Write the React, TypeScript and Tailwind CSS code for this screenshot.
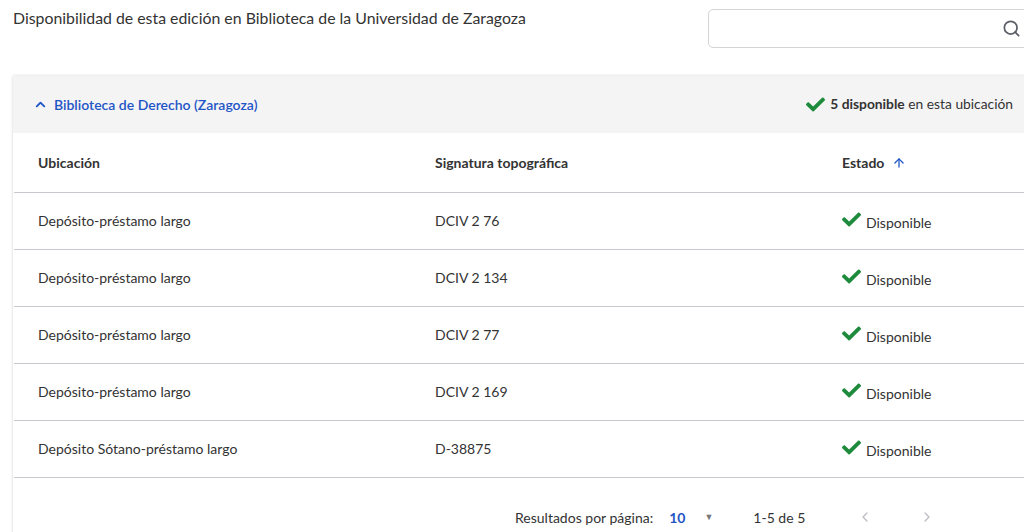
import { ArrowUp, ChevronLeft, ChevronRight, ChevronUp, Search } from "lucide-react";
import { FaCheck } from "react-icons/fa";

const rows = [
  { loc: "Depósito-préstamo largo", sig: "DCIV 2 76" },
  { loc: "Depósito-préstamo largo", sig: "DCIV 2 134" },
  { loc: "Depósito-préstamo largo", sig: "DCIV 2 77" },
  { loc: "Depósito-préstamo largo", sig: "DCIV 2 169" },
  { loc: "Depósito Sótano-préstamo largo", sig: "D-38875" },
];

export default function App() {
  return (
    <div
      className="h-[532px] w-[1024px] overflow-hidden bg-white text-[#333]"
      style={{ fontFamily: "Lato, 'Open Sans', sans-serif" }}
    >
      <div className="w-[1037px] pl-[13px]">
        {/* title + search */}
        <div className="flex items-start justify-between pt-[9px]">
          <h1 className="text-[15.85px] leading-[18px] text-[#333]">
            Disponibilidad de esta edición en Biblioteca de la Universidad de Zaragoza
          </h1>
          <div className="flex h-[39px] w-[329px] items-center justify-end rounded-[5px] border border-[#d4d4d8] pr-[15px]">
            <Search size={19} strokeWidth={2.2} className="text-[#5b5e66]" />
          </div>
        </div>

        {/* card */}
        <div className="mt-[28px] bg-white shadow-[0_0_3px_rgba(0,0,0,0.18)]">
          <div className="flex h-[57px] items-center justify-between bg-[#f4f4f5] pl-[20px] pr-[24px]">
            <div className="flex items-center gap-[6px] text-[14px] font-semibold text-[#1f55c6]">
              <ChevronUp size={15} strokeWidth={3} />
              <span>Biblioteca de Derecho (Zaragoza)</span>
            </div>
            <div className="flex items-center gap-[5px] text-[13.8px] text-[#333]">
              <FaCheck size={19} className="text-[#1e8a3c]" />
              <span>
                <span className="font-bold">5 disponible</span> en esta ubicación
              </span>
            </div>
          </div>

          <div className="grid grid-cols-[398px_407px_1fr] pl-[1px] text-[14px]">
            <div className="flex h-[60px] items-center border-b border-[#c8c8cf] pl-[24px] font-bold">
              Ubicación
            </div>
            <div className="flex h-[60px] items-center border-b border-[#c8c8cf] pl-[23px] font-bold">
              Signatura topográfica
            </div>
            <div className="flex h-[60px] items-center gap-[8px] border-b border-[#c8c8cf] pl-[23px] font-bold">
              Estado
              <ArrowUp size={14} strokeWidth={2.2} className="text-[#1f55c6]" />
            </div>

            {rows.map((r, i) => (
              <div key={i} className="contents">
                <div className="flex h-[57px] items-center border-b border-[#c8c8cf] pb-[2px] pl-[24px]">
                  {r.loc}
                </div>
                <div className="flex h-[57px] items-center border-b border-[#c8c8cf] pb-[2px] pl-[23px]">
                  {r.sig}
                </div>
                <div className="flex h-[57px] items-center gap-[5px] border-b border-[#c8c8cf] pl-[23px]">
                  <FaCheck size={19} className="-mt-[4px] text-[#1e8a3c]" />
                  <span className="mt-[3px]">Disponible</span>
                </div>
              </div>
            ))}
          </div>

          <div className="flex h-[78px] items-center pl-[502px] text-[14px]">
            <span>Resultados por página:</span>
            <span className="ml-[16px] font-bold text-[#1f55c6]">10</span>
            <span className="ml-[19px] text-[9px] text-[#777]">▼</span>
            <span className="ml-[40px]">1-5 de 5</span>
            <ChevronLeft size={16} className="ml-[52px] text-[#bdbdc2]" />
            <ChevronRight size={16} className="ml-[46px] text-[#bdbdc2]" />
          </div>
        </div>
      </div>
    </div>
  );
}
